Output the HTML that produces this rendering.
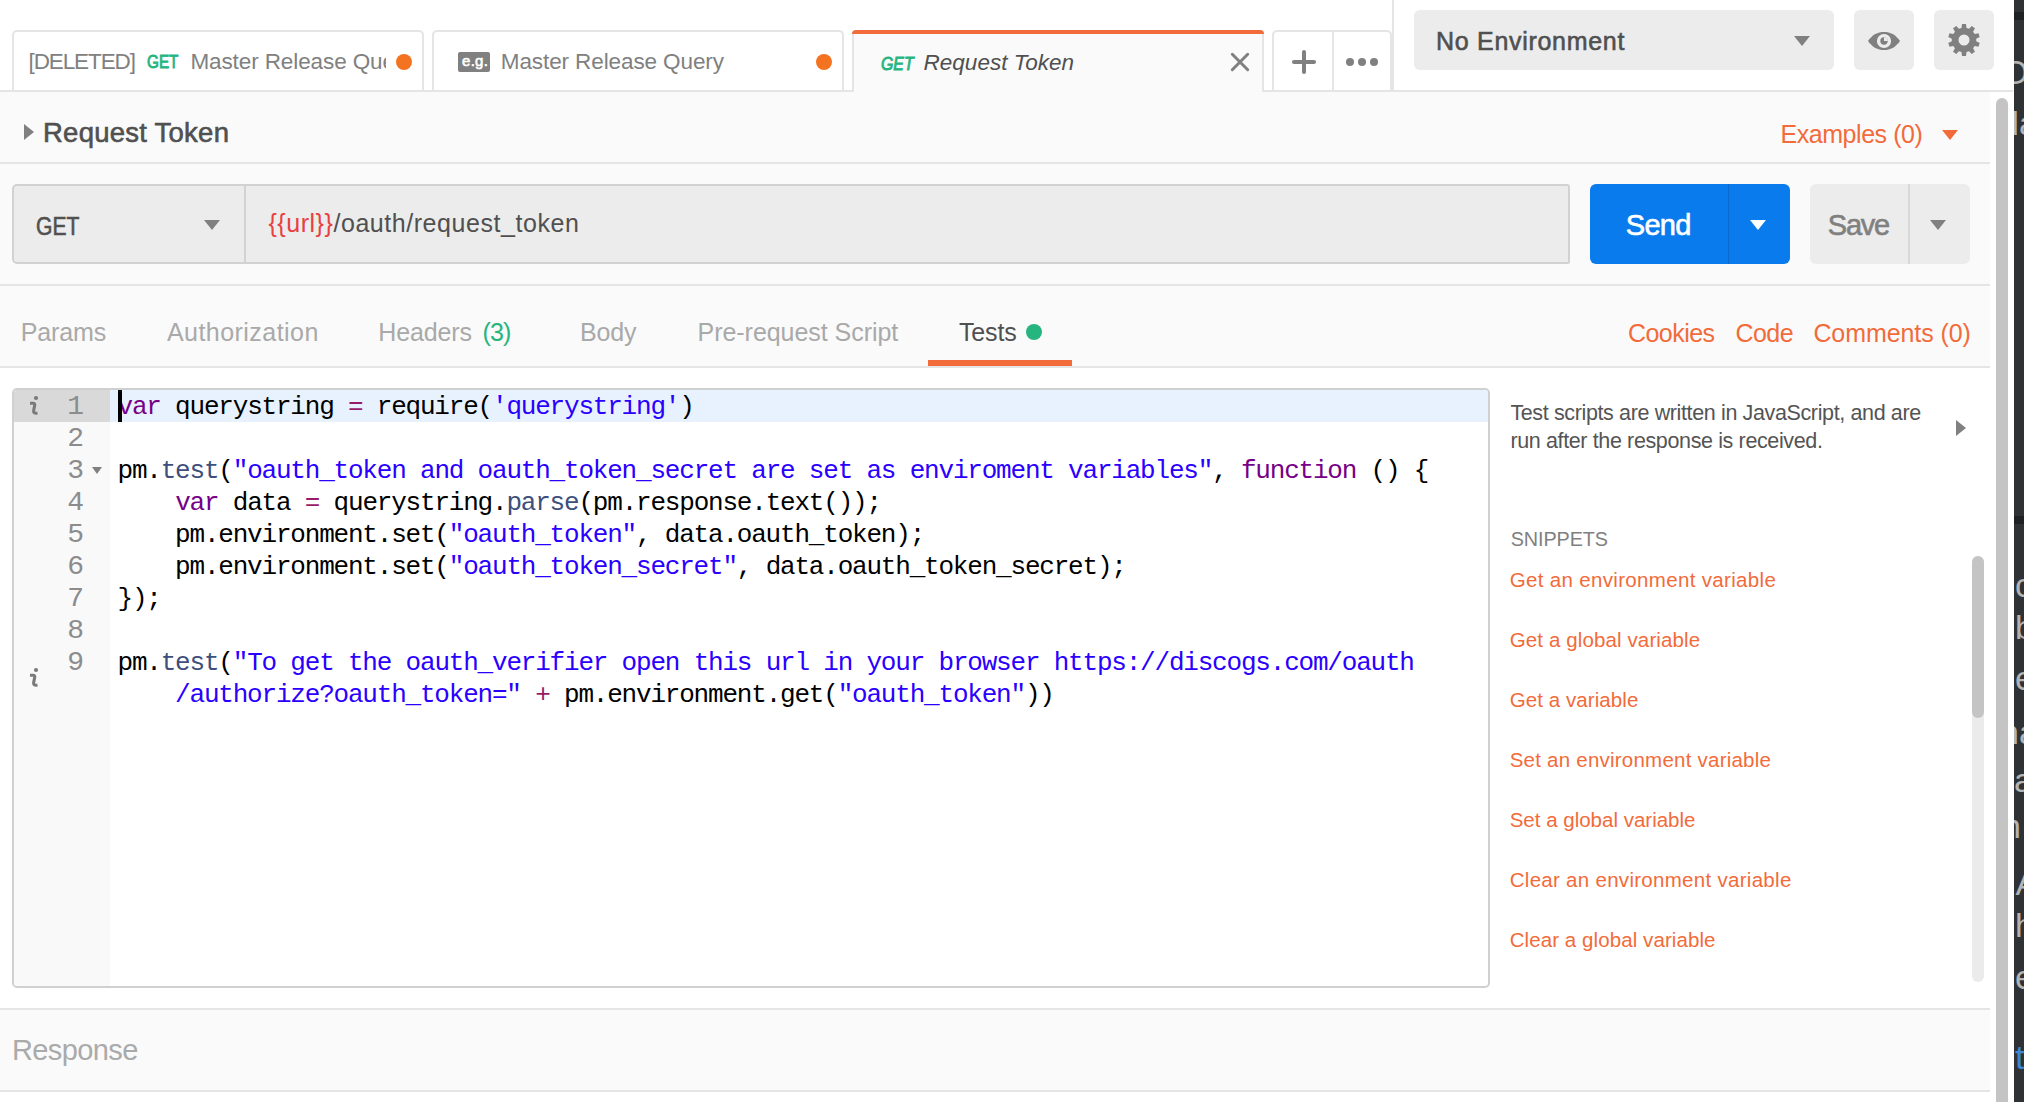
<!DOCTYPE html>
<html><head><meta charset="utf-8"><title>Postman</title>
<style>
html,body{margin:0;padding:0;}
body{width:2024px;height:1102px;overflow:hidden;position:relative;background:#ffffff;font-family:"Liberation Sans",sans-serif;}
.a{position:absolute;box-sizing:border-box;}
.t{position:absolute;line-height:0;white-space:nowrap;}
.code{position:absolute;left:117.5px;font-family:"Liberation Mono",monospace;font-size:26px;letter-spacing:-1.2px;line-height:32px;white-space:pre;color:#000;}
.ln{position:absolute;font-family:"Liberation Mono",monospace;font-size:28px;line-height:32px;color:#8c8c8c;text-align:right;width:60px;left:24px;}
.k{color:#770088}.s{color:#2a00ff}.p{color:#3d4f7c}.o{color:#981a68}
</style></head><body>
<div class="a" style="left:0px;top:0px;width:2014px;height:90px;background:#ffffff;"></div>
<div class="a" style="left:0px;top:92px;width:1990px;height:1010px;background:#fafafa;"></div>
<div class="a" style="left:0px;top:90px;width:2013px;height:2px;background:#e5e5e5;"></div>
<div class="a" style="left:12px;top:30px;width:412px;height:60px;background:#ffffff;border:2px solid #e5e5e5;border-bottom:none;border-radius:5px 5px 0 0;"></div>
<div class="a" style="left:432px;top:30px;width:412px;height:60px;background:#ffffff;border:2px solid #e5e5e5;border-bottom:none;border-radius:5px 5px 0 0;"></div>
<div class="a" style="left:852px;top:30px;width:412px;height:62px;background:#fafafa;border-left:2px solid #e5e5e5;border-right:2px solid #e5e5e5;border-radius:5px 5px 0 0;"></div>
<div class="a" style="left:852px;top:30px;width:412px;height:4px;background:#f26b3a;border-radius:5px 5px 0 0;"></div>
<div class="a" style="left:1272px;top:30px;width:120px;height:60px;background:#ffffff;border:2px solid #e5e5e5;border-bottom:none;border-radius:5px 5px 0 0;"></div>
<div class="a" style="left:1332px;top:32px;width:2px;height:58px;background:#e5e5e5;"></div>
<div class="a" style="left:1392px;top:0px;width:2px;height:90px;background:#e5e5e5;"></div>
<div class="t" style="left:28.50px;top:62.20px;font-size:22.5px;color:#808080;font-weight:400;font-style:normal;letter-spacing:-1.1px;">[DELETED]</div>
<div class="t" style="left:146.50px;top:62.06px;font-size:18px;color:#26b47f;font-weight:400;font-style:normal;letter-spacing:0px;-webkit-text-stroke:0.9px #26b47f;transform:scaleX(0.85);transform-origin:0 0;">GET</div>
<div class="a" style="left:190px;top:40px;width:196px;height:40px;overflow:hidden;"><div class="t" style="left:0.40px;top:21.80px;font-size:22.5px;color:#808080;font-weight:400;font-style:normal;letter-spacing:-0.1px;">Master Release Query</div>
</div>
<div class="a" style="left:396px;top:54px;width:16px;height:16px;background:#f47321;border-radius:50%;"></div>
<div class="a" style="left:458px;top:52px;width:32px;height:20px;background:#808080;border-radius:2px;"></div>
<div class="t" style="left:462.00px;top:60.80px;font-size:15px;color:#ffffff;font-weight:400;font-style:normal;letter-spacing:0.3px;-webkit-text-stroke:0.6px #ffffff;">e.g.</div>
<div class="t" style="left:500.80px;top:61.80px;font-size:22.5px;color:#808080;font-weight:400;font-style:normal;letter-spacing:-0.1px;">Master Release Query</div>
<div class="a" style="left:816px;top:54px;width:16px;height:16px;background:#f47321;border-radius:50%;"></div>
<div class="t" style="left:880.50px;top:63.56px;font-size:18px;color:#26b47f;font-weight:400;font-style:italic;letter-spacing:0px;-webkit-text-stroke:0.9px #26b47f;transform:scaleX(0.88);transform-origin:0 0;">GET</div>
<div class="t" style="left:923.60px;top:63.20px;font-size:22.5px;color:#505050;font-weight:400;font-style:italic;letter-spacing:0px;">Request Token</div>
<svg class="a" style="left:1228px;top:50px" width="24" height="24" viewBox="0 0 24 24"><path d="M4.3 4.3L19.7 19.7M19.7 4.3L4.3 19.7" stroke="#808080" stroke-width="3" stroke-linecap="round"/></svg>
<svg class="a" style="left:1290px;top:48px" width="28" height="28" viewBox="0 0 28 28"><path d="M14 4V24M4 14H24" stroke="#808080" stroke-width="4" stroke-linecap="round"/></svg>
<div class="a" style="left:1346px;top:58px;width:8px;height:8px;background:#808080;border-radius:50%;"></div>
<div class="a" style="left:1358px;top:58px;width:8px;height:8px;background:#808080;border-radius:50%;"></div>
<div class="a" style="left:1370px;top:58px;width:8px;height:8px;background:#808080;border-radius:50%;"></div>
<div class="a" style="left:1414px;top:10px;width:420px;height:60px;background:#ececec;border-radius:6px;"></div>
<div class="t" style="left:1436.00px;top:41.33px;font-size:25px;color:#505050;font-weight:400;font-style:normal;letter-spacing:0.7px;-webkit-text-stroke:0.6px #505050;">No Environment</div>
<svg class="a" style="left:1794px;top:36px" width="16" height="10" viewBox="0 0 16 10"><path d="M0 0H16L8 10Z" fill="#808080"/></svg>
<div class="a" style="left:1854px;top:10px;width:60px;height:60px;background:#ececec;border-radius:6px;"></div>
<div class="a" style="left:1934px;top:10px;width:60px;height:60px;background:#ececec;border-radius:6px;"></div>
<svg class="a" style="left:1862px;top:26px" width="44" height="30" viewBox="0 0 44 30"><path d="M6 15C10.5 8.6 15.5 6 22 6S33.5 8.6 38 15C33.5 21.4 28.5 24 22 24S10.5 21.4 6 15Z" fill="#808080"/><circle cx="22" cy="15" r="7.1" fill="#ececec"/><circle cx="22" cy="15" r="3.7" fill="#808080"/><path d="M22 11.3A3.7 3.7 0 0 1 25.7 15H22Z" fill="#ececec"/></svg>
<svg class="a" style="left:1944px;top:20px" width="40" height="40" viewBox="0 0 40 40"><path d="M22.48 7.95 L21.99 4.12 L18.01 4.12 L17.52 7.95 L14.93 8.79 L12.28 5.98 L9.05 8.33 L10.91 11.71 L9.31 13.92 L5.52 13.20 L4.29 16.99 L7.78 18.64 L7.78 21.36 L4.29 23.01 L5.52 26.80 L9.31 26.08 L10.91 28.29 L9.05 31.67 L12.28 34.02 L14.93 31.21 L17.52 32.05 L18.01 35.88 L21.99 35.88 L22.48 32.05 L25.07 31.21 L27.72 34.02 L30.95 31.67 L29.09 28.29 L30.69 26.08 L34.48 26.80 L35.71 23.01 L32.22 21.36 L32.22 18.64 L35.71 16.99 L34.48 13.20 L30.69 13.92 L29.09 11.71 L30.95 8.33 L27.72 5.98 L25.07 8.79Z" fill="#808080"/><circle cx="20" cy="20" r="5.5" fill="#ececec"/></svg>
<div class="a" style="left:1990px;top:92px;width:24px;height:1010px;background:#ffffff;"></div>
<div class="a" style="left:1996px;top:98px;width:12px;height:1012px;background:#c4c4c4;border-radius:6px;"></div>
<div class="a" style="left:2014px;top:0px;width:10px;height:1102px;background:#2f3234;"></div>
<div class="a" style="left:2014px;top:12px;width:10px;height:8px;background:#1f2122;"></div>
<div class="a" style="left:2014px;top:516px;width:10px;height:8px;background:#1f2122;"></div>
<div class="a" style="left:2014px;top:0;width:10px;height:1102px;overflow:hidden;"><div class="t" style="left:-12.00px;top:72.21px;font-size:34px;color:#b4b4b4;font-weight:400;font-style:normal;letter-spacing:0px;">O</div>
<div class="t" style="left:-14.00px;top:123.21px;font-size:34px;color:#b4b4b4;font-weight:400;font-style:normal;letter-spacing:0px;">da</div>
<div class="t" style="left:1.00px;top:585.21px;font-size:34px;color:#b4b4b4;font-weight:400;font-style:normal;letter-spacing:0px;">c</div>
<div class="t" style="left:1.00px;top:627.21px;font-size:34px;color:#b4b4b4;font-weight:400;font-style:normal;letter-spacing:0px;">b</div>
<div class="t" style="left:1.00px;top:678.21px;font-size:34px;color:#b4b4b4;font-weight:400;font-style:normal;letter-spacing:0px;">e</div>
<div class="t" style="left:-14.00px;top:732.21px;font-size:34px;color:#b4b4b4;font-weight:400;font-style:normal;letter-spacing:0px;">na</div>
<div class="t" style="left:0.00px;top:780.21px;font-size:34px;color:#b4b4b4;font-weight:400;font-style:normal;letter-spacing:0px;">a</div>
<div class="t" style="left:-12.00px;top:826.21px;font-size:34px;color:#b4b4b4;font-weight:400;font-style:normal;letter-spacing:0px;">n</div>
<div class="t" style="left:-6.00px;top:883.21px;font-size:34px;color:#b4b4b4;font-weight:400;font-style:normal;letter-spacing:0px;">lA</div>
<div class="t" style="left:1.00px;top:925.21px;font-size:34px;color:#b4b4b4;font-weight:400;font-style:normal;letter-spacing:0px;">h</div>
<div class="t" style="left:1.00px;top:977.21px;font-size:34px;color:#b4b4b4;font-weight:400;font-style:normal;letter-spacing:0px;">e</div>
<div class="t" style="left:1.00px;top:1057.21px;font-size:34px;color:#3d86d9;font-weight:400;font-style:normal;letter-spacing:0px;">t</div>
<div class="t" style="left:1.00px;top:1108.21px;font-size:34px;color:#3d86d9;font-weight:400;font-style:normal;letter-spacing:0px;">o</div>
</div>
<div class="a" style="left:0px;top:162px;width:1990px;height:2px;background:#e5e5e5;"></div>
<svg class="a" style="left:24px;top:124px" width="10" height="16" viewBox="0 0 10 16"><path d="M0 0L10 8L0 16Z" fill="#808080"/></svg>
<div class="t" style="left:43.00px;top:132.87px;font-size:27.5px;color:#505050;font-weight:400;font-style:normal;letter-spacing:0.25px;-webkit-text-stroke:0.6px #505050;">Request Token</div>
<div class="t" style="left:1780.50px;top:133.73px;font-size:25px;color:#f26b3a;font-weight:400;font-style:normal;letter-spacing:-0.45px;">Examples (0)</div>
<svg class="a" style="left:1942px;top:130px" width="16" height="10" viewBox="0 0 16 10"><path d="M0 0H16L8 10Z" fill="#f26b3a"/></svg>
<div class="a" style="left:0px;top:284px;width:1990px;height:2px;background:#e5e5e5;"></div>
<div class="a" style="left:12px;top:184px;width:1558px;height:80px;background:#ececec;border:2px solid #d2d2d2;border-radius:5px 3px 2px 5px;"></div>
<div class="a" style="left:244px;top:186px;width:2px;height:76px;background:#d2d2d2;"></div>
<div class="t" style="left:36.00px;top:225.63px;font-size:25px;color:#505050;font-weight:400;font-style:normal;letter-spacing:0px;-webkit-text-stroke:0.6px #505050;transform:scaleX(0.845);transform-origin:0 0;">GET</div>
<svg class="a" style="left:204px;top:220px" width="16" height="10" viewBox="0 0 16 10"><path d="M0 0H16L8 10Z" fill="#808080"/></svg>
<div class="t" style="left:268.40px;top:222.93px;font-size:25px;color:#505050;font-weight:400;font-style:normal;letter-spacing:0.55px;"><span style="color:#e8413f">{{url}}</span>/oauth/request_token</div>
<div class="a" style="left:1590px;top:184px;width:200px;height:80px;background:#097bed;border-radius:6px;"></div>
<div class="a" style="left:1728px;top:184px;width:1px;height:80px;background:#0a6ad0;"></div>
<div class="t" style="left:1625.70px;top:225.45px;font-size:29px;color:#ffffff;font-weight:400;font-style:normal;letter-spacing:-0.65px;-webkit-text-stroke:0.6px #ffffff;">Send</div>
<svg class="a" style="left:1750px;top:220px" width="16" height="10" viewBox="0 0 16 10"><path d="M0 0H16L8 10Z" fill="#ffffff"/></svg>
<div class="a" style="left:1810px;top:184px;width:160px;height:80px;background:#ececec;border-radius:6px;"></div>
<div class="a" style="left:1908px;top:184px;width:2px;height:80px;background:#d8d8d8;"></div>
<div class="t" style="left:1827.80px;top:225.45px;font-size:29px;color:#808080;font-weight:400;font-style:normal;letter-spacing:-1.25px;-webkit-text-stroke:0.6px #808080;">Save</div>
<svg class="a" style="left:1930px;top:220px" width="16" height="10" viewBox="0 0 16 10"><path d="M0 0H16L8 10Z" fill="#808080"/></svg>
<div class="a" style="left:0px;top:366px;width:1990px;height:2px;background:#e5e5e5;"></div>
<div class="t" style="left:20.70px;top:331.53px;font-size:25px;color:#a9a9a9;font-weight:400;font-style:normal;letter-spacing:-0.1px;">Params</div>
<div class="t" style="left:167.00px;top:331.53px;font-size:25px;color:#a9a9a9;font-weight:400;font-style:normal;letter-spacing:0.45px;">Authorization</div>
<div class="t" style="left:378.20px;top:331.53px;font-size:25px;color:#a9a9a9;font-weight:400;font-style:normal;letter-spacing:-0.1px;">Headers</div>
<div class="t" style="left:482.50px;top:331.53px;font-size:25px;color:#26b47f;font-weight:400;font-style:normal;letter-spacing:-0.85px;">(3)</div>
<div class="t" style="left:580.00px;top:331.53px;font-size:25px;color:#a9a9a9;font-weight:400;font-style:normal;letter-spacing:-0.2px;">Body</div>
<div class="t" style="left:697.60px;top:331.53px;font-size:25px;color:#a9a9a9;font-weight:400;font-style:normal;letter-spacing:-0.05px;">Pre-request Script</div>
<div class="t" style="left:958.90px;top:331.53px;font-size:25px;color:#505050;font-weight:400;font-style:normal;letter-spacing:-0.1px;">Tests</div>
<div class="a" style="left:1026px;top:324px;width:16px;height:16px;background:#26b47f;border-radius:50%;"></div>
<div class="a" style="left:928px;top:360px;width:144px;height:6px;background:#f26b3a;"></div>
<div class="t" style="left:1628.00px;top:333.23px;font-size:25px;color:#f26b3a;font-weight:400;font-style:normal;letter-spacing:-0.55px;">Cookies</div>
<div class="t" style="left:1735.40px;top:333.23px;font-size:25px;color:#f26b3a;font-weight:400;font-style:normal;letter-spacing:-0.5px;">Code</div>
<div class="t" style="left:1813.40px;top:333.23px;font-size:25px;color:#f26b3a;font-weight:400;font-style:normal;letter-spacing:-0.08px;">Comments (0)</div>
<div class="a" style="left:0px;top:368px;width:1990px;height:640px;background:#ffffff;"></div>
<div class="a" style="left:12px;top:388px;width:1478px;height:600px;background:#ffffff;border:2px solid #d0d0d0;border-radius:5px;"></div>
<div class="a" style="left:14px;top:390px;width:96px;height:596px;background:#f9f9f9;border-radius:3px 0 0 3px;"></div>
<div class="a" style="left:14px;top:390px;width:96px;height:32px;background:#d9d9d9;border-radius:3px 0 0 0;"></div>
<div class="a" style="left:110px;top:390px;width:1378px;height:32px;background:#e8f2fe;border-radius:0 3px 0 0;"></div>
<div class="ln" style="top:390.5px">1</div>
<div class="ln" style="top:422.5px">2</div>
<div class="ln" style="top:454.5px">3</div>
<div class="ln" style="top:486.5px">4</div>
<div class="ln" style="top:518.5px">5</div>
<div class="ln" style="top:550.5px">6</div>
<div class="ln" style="top:582.5px">7</div>
<div class="ln" style="top:614.5px">8</div>
<div class="ln" style="top:646.5px">9</div>
<svg class="a" style="left:26px;top:392px" width="16" height="26" viewBox="0 0 16 26"><circle cx="10" cy="6" r="2.1" fill="#7a7a7a"/><path d="M4 11.2H7.2Q9.1 11.2 8.7 13.4L7.7 18.3Q7.2 21 9.6 21.2H11.5" fill="none" stroke="#7a7a7a" stroke-width="3.1" stroke-linejoin="round"/></svg>
<svg class="a" style="left:26px;top:664px" width="16" height="26" viewBox="0 0 16 26"><circle cx="10" cy="6" r="2.1" fill="#7a7a7a"/><path d="M4 11.2H7.2Q9.1 11.2 8.7 13.4L7.7 18.3Q7.2 21 9.6 21.2H11.5" fill="none" stroke="#7a7a7a" stroke-width="3.1" stroke-linejoin="round"/></svg>
<svg class="a" style="left:92px;top:467px" width="10" height="7" viewBox="0 0 10 7"><path d="M0 0H10L5 7Z" fill="#808080"/></svg>
<div class="code" style="top:391px"><span class="k">var</span> querystring <span class="o">=</span> require(<span class="s">'querystring'</span>)</div>
<div class="code" style="top:423px"></div>
<div class="code" style="top:455px">pm.<span class="p">test</span>(<span class="s">"oauth_token and oauth_token_secret are set as enviroment variables"</span>, <span class="k">function</span> () {</div>
<div class="code" style="top:487px">    <span class="k">var</span> data <span class="o">=</span> querystring.<span class="p">parse</span>(pm.response.text());</div>
<div class="code" style="top:519px">    pm.environment.set(<span class="s">"oauth_token"</span>, data.oauth_token);</div>
<div class="code" style="top:551px">    pm.environment.set(<span class="s">"oauth_token_secret"</span>, data.oauth_token_secret);</div>
<div class="code" style="top:583px">});</div>
<div class="code" style="top:615px"></div>
<div class="code" style="top:647px">pm.<span class="p">test</span>(<span class="s">"To get the oauth_verifier open this url in your browser https://discogs.com/oauth</span></div>
<div class="code" style="top:679px"><span class="s">    /authorize?oauth_token="</span> <span class="o">+</span> pm.environment.get(<span class="s">"oauth_token"</span>))</div>
<div class="a" style="left:118px;top:390px;width:4px;height:32px;background:#000000;"></div>
<div class="t" style="left:1510.40px;top:412.55px;font-size:21.5px;color:#545454;font-weight:400;font-style:normal;letter-spacing:-0.37px;">Test scripts are written in JavaScript, and are</div>
<div class="t" style="left:1510.40px;top:440.75px;font-size:21.5px;color:#545454;font-weight:400;font-style:normal;letter-spacing:-0.37px;">run after the response is received.</div>
<svg class="a" style="left:1956px;top:420px" width="10" height="16" viewBox="0 0 10 16"><path d="M0 0L10 8L0 16Z" fill="#808080"/></svg>
<div class="t" style="left:1510.70px;top:538.74px;font-size:19.8px;color:#808080;font-weight:400;font-style:normal;letter-spacing:-0.08px;">SNIPPETS</div>
<div class="t" style="left:1509.70px;top:580.29px;font-size:20.5px;color:#f26b3a;font-weight:400;font-style:normal;letter-spacing:0.33px;">Get an environment variable</div>
<div class="t" style="left:1509.70px;top:640.29px;font-size:20.5px;color:#f26b3a;font-weight:400;font-style:normal;letter-spacing:0.12px;">Get a global variable</div>
<div class="t" style="left:1509.70px;top:700.29px;font-size:20.5px;color:#f26b3a;font-weight:400;font-style:normal;letter-spacing:0.08px;">Get a variable</div>
<div class="t" style="left:1509.70px;top:760.29px;font-size:20.5px;color:#f26b3a;font-weight:400;font-style:normal;letter-spacing:0.23px;">Set an environment variable</div>
<div class="t" style="left:1509.70px;top:820.29px;font-size:20.5px;color:#f26b3a;font-weight:400;font-style:normal;letter-spacing:0px;">Set a global variable</div>
<div class="t" style="left:1509.70px;top:880.29px;font-size:20.5px;color:#f26b3a;font-weight:400;font-style:normal;letter-spacing:0.29px;">Clear an environment variable</div>
<div class="t" style="left:1509.70px;top:940.29px;font-size:20.5px;color:#f26b3a;font-weight:400;font-style:normal;letter-spacing:0.08px;">Clear a global variable</div>
<div class="a" style="left:1972px;top:556px;width:12px;height:426px;background:#ebebeb;border-radius:6px;"></div>
<div class="a" style="left:1972px;top:556px;width:12px;height:162px;background:#c4c4c4;border-radius:6px;"></div>
<div class="a" style="left:0px;top:1008px;width:1990px;height:2px;background:#e5e5e5;"></div>
<div class="a" style="left:0px;top:1090px;width:1990px;height:2px;background:#e5e5e5;"></div>
<div class="a" style="left:0px;top:1092px;width:1990px;height:10px;background:#ffffff;"></div>
<div class="t" style="left:12.00px;top:1049.85px;font-size:29px;color:#aaaaaa;font-weight:400;font-style:normal;letter-spacing:-0.6px;">Response</div>
</body></html>
